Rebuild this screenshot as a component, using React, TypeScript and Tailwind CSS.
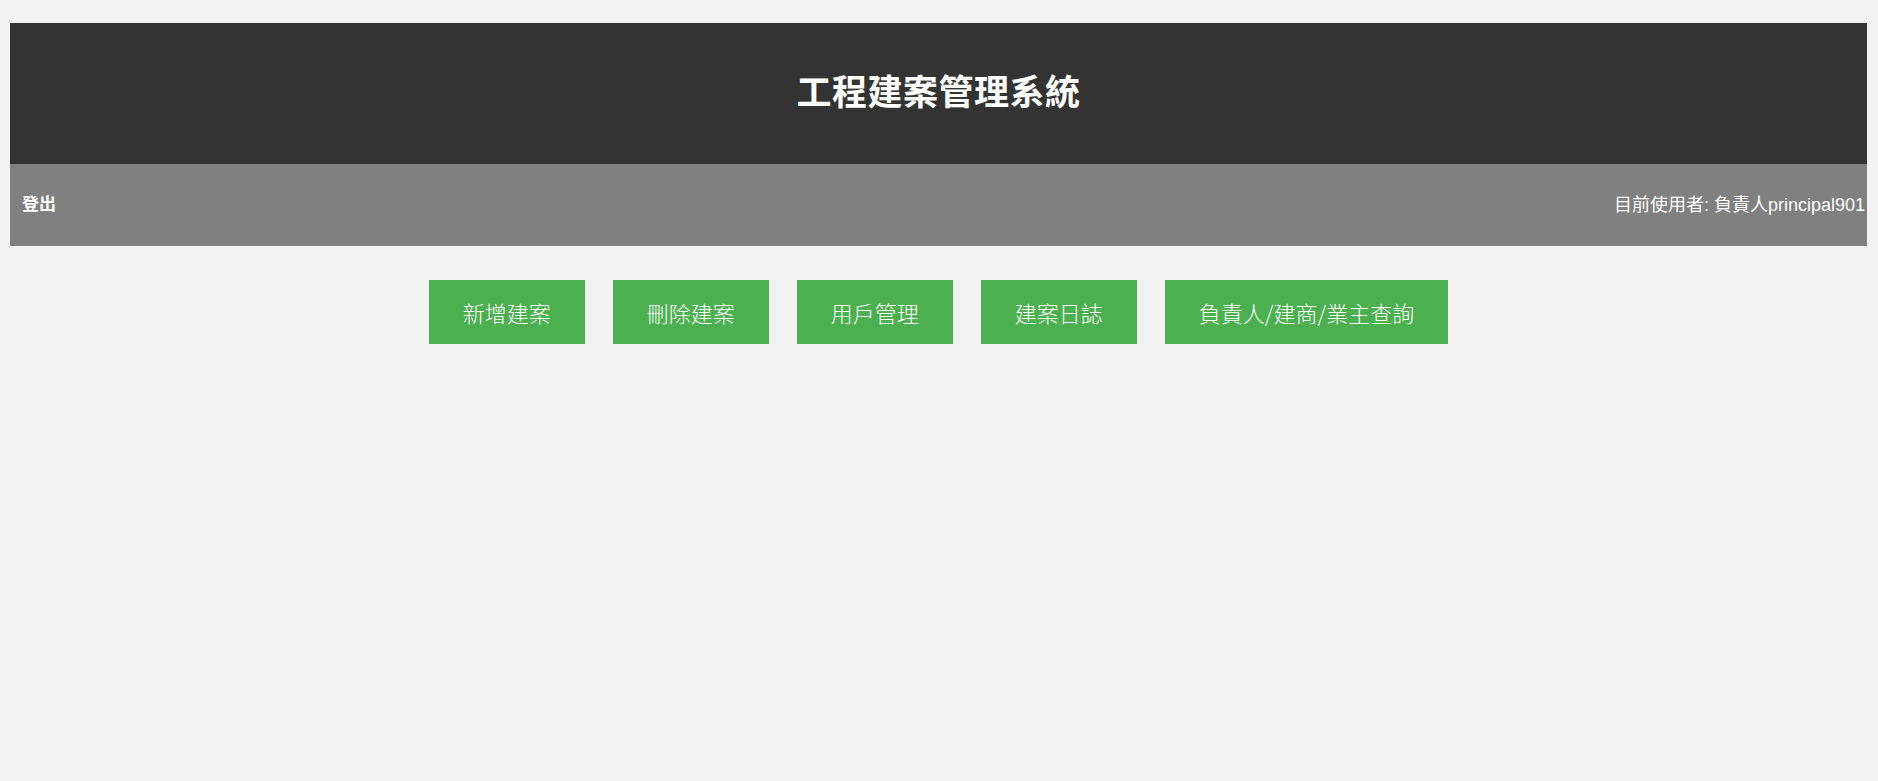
import React from "react";

const buttons = ["新增建案", "刪除建案", "用戶管理", "建案日誌", "負責人/建商/業主查詢"];

export default function App() {
  return (
    <div className="min-h-screen bg-[#f2f2f2] pt-[23px] pl-[10px] pr-[11px] font-['Liberation_Sans','Noto_Sans_CJK_TC',sans-serif]">
      <header className="h-[141px] bg-[#333333] flex items-center justify-center">
        <h1 className="text-white text-[35px] font-bold tracking-[0.5px]">工程建案管理系統</h1>
      </header>
      <nav className="h-[82px] bg-[#808080] flex items-center justify-between pl-[12px] pr-[2px] text-white text-[18px]">
        <a className="font-bold cursor-pointer text-[17px]">登出</a>
        <span>目前使用者: 負責人principal901</span>
      </nav>
      <div className="flex justify-center gap-[28px] mt-[34px]">
        {buttons.map((b) => (
          <button
            key={b}
            className="h-[64px] px-[34px] bg-[#4caf50] text-white text-[22px] font-['Noto_Sans_CJK_TC',sans-serif] font-light"
          >
            {b}
          </button>
        ))}
      </div>
    </div>
  );
}
